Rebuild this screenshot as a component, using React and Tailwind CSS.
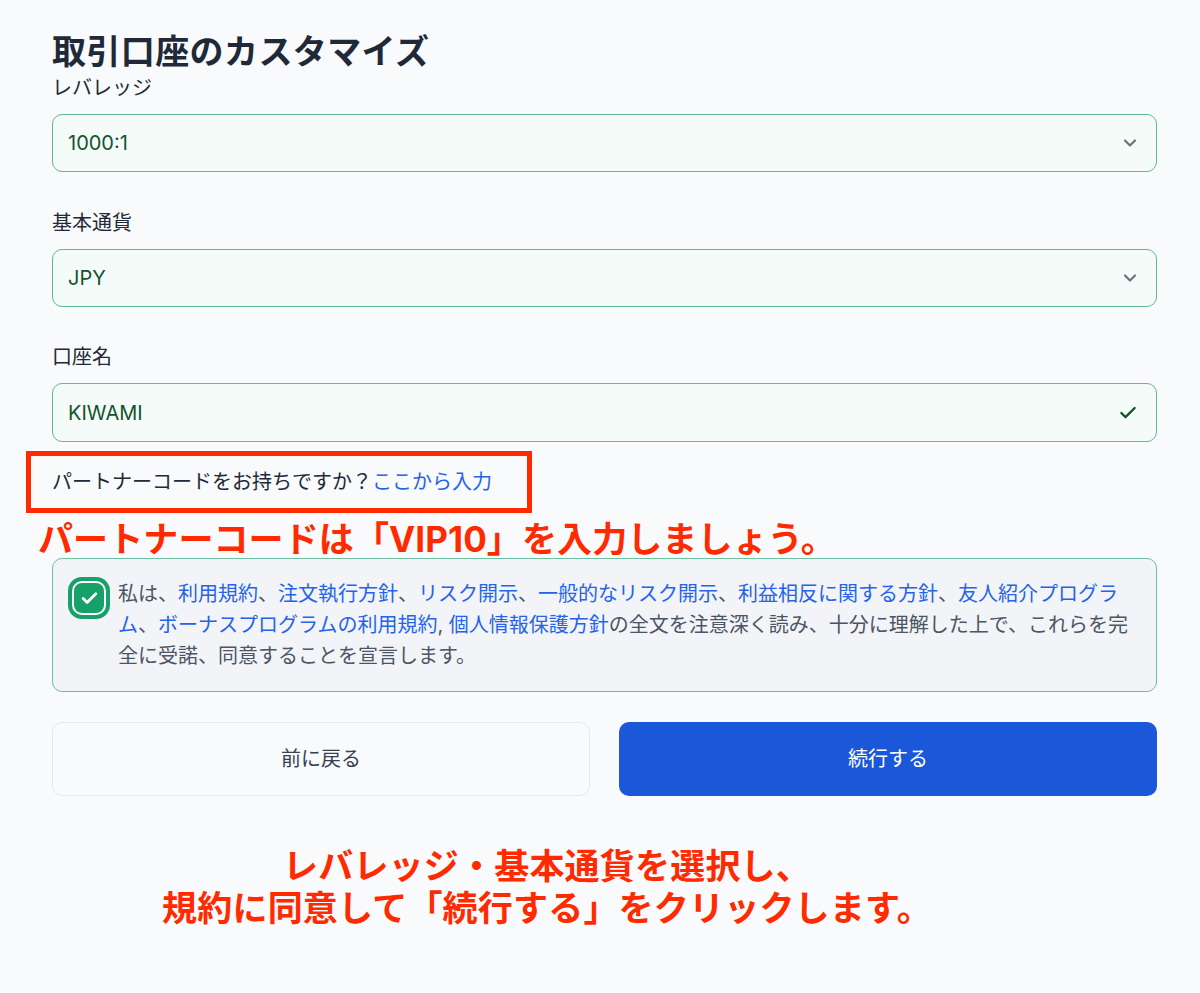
import React, { useState } from 'react';
import { ChevronDown, Check } from 'lucide-react';

const links = [
    '利用規約',
    '注文執行方針',
    'リスク開示',
    '一般的なリスク開示',
    '利益相反に関する方針',
    '友人紹介プログラム',
];

const SelectField = ({ label, value, first }) => (
    <div className={first ? 'mt-1' : 'mt-[39px]'}>
        <label className="block text-[20px] leading-6 text-[#1f2937]">{label}</label>
        <div className="mt-[14px] h-[58px] flex items-center justify-between px-[15px] rounded-[10px] border border-[#62b896] bg-[#f4fbf8]">
            <span className="text-[20px] text-[#14532d]">{value}</span>
            <ChevronDown size={20} strokeWidth={2.6} className="text-[#6b7280] mr-[1px]" />
        </div>
    </div>
);

const App = () => {
    const [agreed, setAgreed] = useState(true);

    return (
        <div className="min-h-screen bg-[#f8fafc] font-['Inter','Noto_Sans_CJK_JP',sans-serif] pt-8">
            <div className="ml-[52px] w-[1105px]">
                <h1 className="text-[34px] leading-[40px] font-bold text-[#1f2937] tracking-[0.4px]">取引口座のカスタマイズ</h1>

                <SelectField label="レバレッジ" value="1000:1" first />
                <SelectField label="基本通貨" value="JPY" />

                <div className="mt-[38px]">
                    <label className="block text-[20px] leading-6 text-[#1f2937]">口座名</label>
                    <div className="mt-[14px] h-[59px] flex items-center justify-between px-[15px] rounded-[10px] border border-[#62b896] bg-[#f4fbf8]">
                        <span className="text-[20px] text-[#14532d]">KIWAMI</span>
                        <Check size={20} strokeWidth={2.8} className="text-[#14532d] mr-[3px]" />
                    </div>
                </div>

                {/* パートナーコード */}
                <div className="mt-[9px] ml-[-26px] w-fit border-[5px] border-[#ff2a00] pl-[21px] pr-[35px] py-[14px]">
                    <p className="text-[20px] leading-6 text-[#1f2937]">
                        パートナーコードをお持ちですか？<a href="#" className="text-[#2563eb]">ここから入力</a>
                    </p>
                </div>
                <p className="mt-[7px] ml-[-14px] text-[35px] leading-[38px] font-bold tracking-[0.1px] text-[#ff2a00]">
                    パートナーコードは「VIP10」を入力しましょう。
                </p>

                {/* 規約同意 */}
                <div className="flex items-start gap-[14px] rounded-[10px] border border-[#6cc0a0] bg-[#f2f4f7] pl-[21px] pr-[20px] pt-[20px] pb-[19px]">
                    <button
                        type="button"
                        onClick={() => setAgreed(!agreed)}
                        className={`mt-[4px] shrink-0 w-[30px] h-[30px] rounded-[8px] flex items-center justify-center ${agreed ? 'bg-[#16a06a] ring-[4px] ring-[#16a06a] ring-offset-2 ring-offset-white' : 'bg-white border border-gray-300'}`}
                    >
                        {agreed && <Check size={19} strokeWidth={3.5} className="text-white" />}
                    </button>
                    <p className="text-[20px] leading-[31px] text-[#4b5563]">
                        私は、
                        {links.map((l) => (
                            <React.Fragment key={l}>
                                <a href="#" className="text-[#2563eb]">{l}</a>、
                            </React.Fragment>
                        ))}
                        <a href="#" className="text-[#2563eb]">ボーナスプログラムの利用規約</a>,{' '}
                        <a href="#" className="text-[#2563eb]">個人情報保護方針</a>
                        の全文を注意深く読み、十分に理解した上で、これらを完全に受諾、同意することを宣言します。
                    </p>
                </div>

                <div className="mt-[30px] grid grid-cols-2 gap-[29px]">
                    <button className="h-[74px] rounded-[10px] border border-[#e5e7eb] bg-[#f8fafc] text-[20px] text-[#374151]">
                        前に戻る
                    </button>
                    <button className="h-[74px] rounded-[10px] bg-[#1b57d9] text-[20px] text-white">
                        続行する
                    </button>
                </div>
            </div>

            <div className="w-[1094px] mt-[49px] text-center text-[35px] leading-[42px] font-bold tracking-[0.2px] text-[#ff2a00]">
                <p>レバレッジ・基本通貨を選択し、</p>
                <p>規約に同意して「続行する」をクリックします。</p>
            </div>
        </div>
    );
};

export default App;
